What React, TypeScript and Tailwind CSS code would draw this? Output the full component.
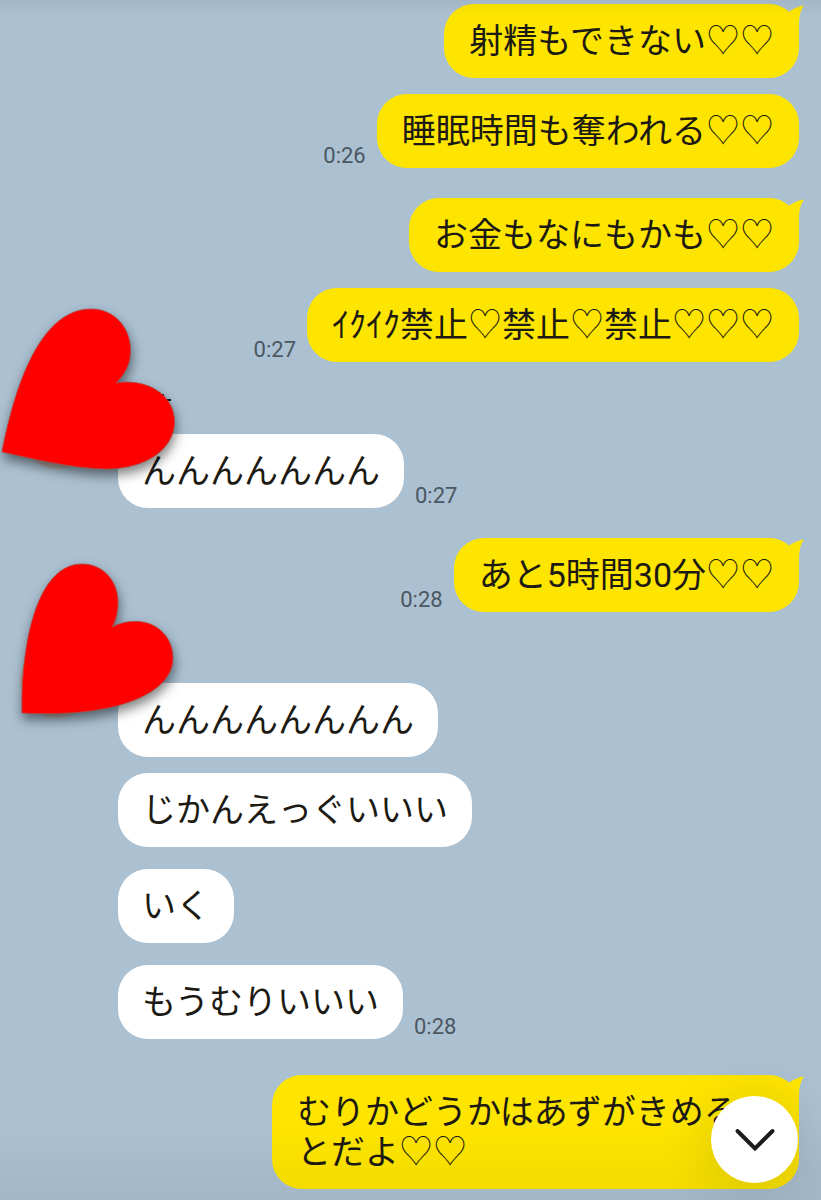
import React from 'react';
import clsx from 'clsx';

type Message = {
    text: string;
    time?: string;
    tail?: boolean;
    gap: string;
};

type Group = {
    from: 'me' | 'friend';
    gap: string;
    heart?: 'wide' | 'tall';
    messages: Message[];
};

const groups: Group[] = [
    {
        from: 'me',
        gap: 'mt-0',
        messages: [
            { text: '射精もできない♡♡', tail: true, gap: 'mt-0' },
            { text: '睡眠時間も奪われる♡♡', time: '0:26', gap: 'mt-4' },
        ],
    },
    {
        from: 'me',
        gap: 'mt-[30px]',
        messages: [
            { text: 'お金もなにもかも♡♡', tail: true, gap: 'mt-0' },
            { text: 'ｲｸｲｸ禁止♡禁止♡禁止♡♡♡', time: '0:27', gap: 'mt-4' },
        ],
    },
    {
        from: 'friend',
        gap: 'mt-8',
        heart: 'wide',
        messages: [{ text: 'んんんんんんん', time: '0:27', gap: 'mt-0' }],
    },
    {
        from: 'me',
        gap: 'mt-[30px]',
        messages: [{ text: 'あと5時間30分♡♡', time: '0:28', tail: true, gap: 'mt-0' }],
    },
    {
        from: 'friend',
        gap: 'mt-[31px]',
        heart: 'tall',
        messages: [
            { text: 'んんんんんんんん', gap: 'mt-0' },
            { text: 'じかんえっぐいいい', gap: 'mt-4' },
            { text: 'いく', gap: 'mt-[22px]' },
            { text: 'もうむりいいい', time: '0:28', gap: 'mt-[22px]' },
        ],
    },
    {
        from: 'me',
        gap: 'mt-9',
        messages: [{ text: 'むりかどうかはあずがきめることだよ♡♡', tail: true, gap: 'mt-0' }],
    },
];

const heartPaths = {
    wide: 'M2 58C12 6 36 -85 91 -85C114 -85 130 -67 130.500 -45C131 -30 125 -20 116 -11C146 -16 174 0 174.500 27C175 52 150 75 105 75C70 74 35 65 2 58Z',
    tall: 'M22 70C21 -3 38 -79 82 -79C104 -79 118 -61 118 -41C118 -31 116 -23 112 -16C120 -20 128 -22 137 -21.500C158 -21 173 -5 173 15C173 49 120 75 22 70Z',
};

// アイコンの上に重ねるハート
const HeartSticker = ({ shape }: { shape: 'wide' | 'tall' }) => (
    <svg
        viewBox="0 0 118 80"
        className="absolute top-0 left-0 z-10 h-20 w-[118px] overflow-visible drop-shadow-[1px_6px_6px_rgba(0,0,0,0.5)]"
        aria-hidden="true"
    >
        <path d={heartPaths[shape]} fill="#ff0000" stroke="#b5453f" strokeWidth="0.8" />
    </svg>
);

const Tail = () => (
    <svg viewBox="0 0 20 30" className="absolute top-0 -right-[5px] h-[30px] w-5" aria-hidden="true">
        <path d="M5 7.500Q14 2 20 1.500Q15 8 15 20V30L3 12Z" fill="#fee500" />
    </svg>
);

const Bubble = ({ message, mine }: { message: Message; mine: boolean }) => (
    <li
        className={clsx(
            'flex items-end gap-[11px]',
            mine && 'flex-row-reverse',
            message.gap
        )}
    >
        <p
            className={clsx(
                'relative max-w-[527px] rounded-[30px] py-[17px] text-[34px] leading-10 break-all text-[#1c1a12]',
                mine ? 'bg-[#fee500] px-[25px]' : 'bg-white px-6'
            )}
        >
            {/* ハートだけ細字にする */}
            {message.text.split(/(♡+)/).map((part, i) => (
                <span key={i} className={clsx(part.startsWith('♡') && 'font-thin')}>
                    {part}
                </span>
            ))}
            {message.tail && <Tail />}
        </p>
        {message.time && (
            <time className="text-[22px] leading-6 text-[#4b5761]">{message.time}</time>
        )}
    </li>
);

const MessageGroup = ({ group }: { group: Group }) => {
    const mine = group.from === 'me';
    return (
        <section className={clsx('flex', group.gap)}>
            {!mine && (
                <div className="relative w-[118px] shrink-0 pl-5">
                    <div className="size-[75px] rounded-full bg-[#b9aba6]" />
                    {group.heart && <HeartSticker shape={group.heart} />}
                </div>
            )}
            <div className="min-w-0 flex-1">
                {!mine && (
                    <div className="h-10">
                        {group.heart === 'wide' && (
                            <svg viewBox="0 0 54 12" className="h-3 w-[54px]" aria-hidden="true">
                                <path d="M45 0V5M42 6H53" stroke="#1c1c1c" strokeWidth="2" />
                            </svg>
                        )}
                    </div>
                )}
                <ul>
                    {group.messages.map((message, i) => (
                        <Bubble key={i} message={message} mine={mine} />
                    ))}
                </ul>
            </div>
        </section>
    );
};

export default function App() {
    return (
        <main
            lang="ja"
            className="relative min-h-screen overflow-hidden bg-[#abc0d1] pt-1 pr-[22px] pb-3 font-['Roboto','Noto_Sans_CJK_JP',sans-serif]"
        >
            {groups.map((group, i) => (
                <MessageGroup key={i} group={group} />
            ))}

            {/* 上下の影 */}
            <div className="pointer-events-none absolute inset-x-0 top-0 h-4 bg-linear-to-b from-black/5 to-transparent" />
            <div className="pointer-events-none absolute inset-x-0 bottom-0 h-20 bg-linear-to-t from-black/5 to-transparent" />

            <button
                type="button"
                aria-label="最新のメッセージへ"
                className="fixed right-[23px] bottom-[17px] z-20 flex size-[87px] items-center justify-center rounded-full bg-white shadow-[0_4px_56px_rgba(0,0,0,0.14)]"
            >
                <svg viewBox="0 0 42 24" className="h-6 w-[42px]" fill="none" aria-hidden="true">
                    <path
                        d="M3.500 3L21 20.500L38.500 3"
                        stroke="#1b1b1b"
                        strokeWidth="4"
                        strokeLinecap="round"
                        strokeLinejoin="miter"
                    />
                </svg>
            </button>
        </main>
    );
}
